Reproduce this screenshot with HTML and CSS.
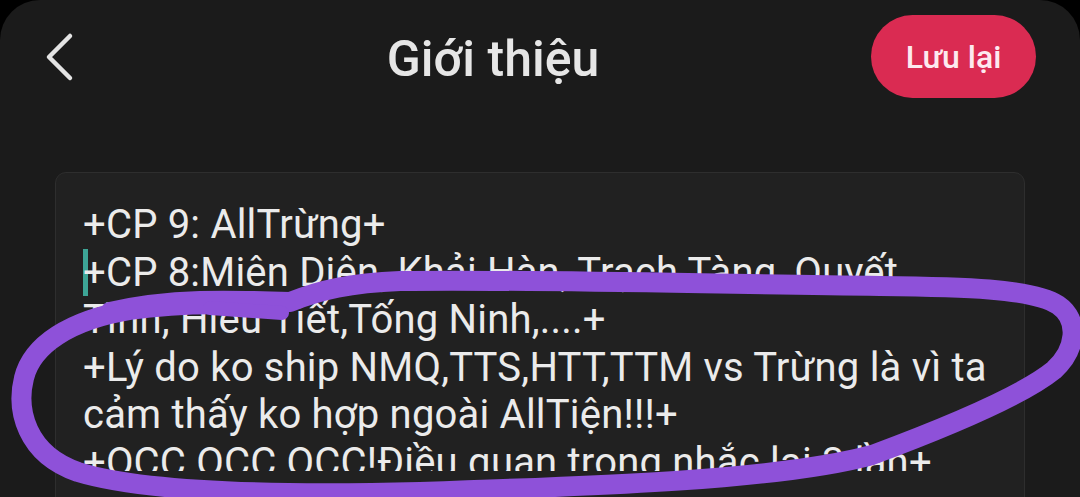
FILE: index.html
```html
<!DOCTYPE html>
<html lang="vi">
<head>
    <meta charset="UTF-8">
    <meta name="viewport" content="width=device-width, initial-scale=1.0">
    <title>Giới thiệu</title>
    <link rel="stylesheet" href="styles.css">
</head>
<body>
    <div class="sheet">
        <header class="topbar">
            <button class="back" aria-label="Quay lại">
                <svg width="30" height="50" viewBox="0 0 30 50">
                    <polyline points="25,4 4,25 25,46" fill="none" stroke="#e4e4e4" stroke-width="4.5" stroke-linecap="round" stroke-linejoin="round"/>
                </svg>
            </button>
            <h1 class="title">Giới thiệu</h1>
            <button class="save">Lưu lại</button>
        </header>

        <div class="field">
            <div class="field-text">
                <div class="line">+CP 9: AllTrừng+</div>
                <div class="line"><span class="caret"></span>+CP 8:Miên Diện, Khải Hàn, Trạch Tàng, Quyết</div>
                <div class="line">Tình, Hiếu Tiết,Tống Ninh,....+</div>
                <div class="line">+Lý do ko ship NMQ,TTS,HTT,TTM vs Trừng là vì ta</div>
                <div class="line">cảm thấy ko hợp ngoài AllTiện!!!+</div>
                <div class="line">+OCC OCC OCC!Điều quan trong nhắc lại 3 lần+</div>
            </div>
        </div>

        <!-- hand drawn circle on top of the screenshot -->
        <svg class="scribble" width="1080" height="497" viewBox="0 0 1080 497">
            <path d="M 110 312 C 170 298, 230 300, 290 302 C 320 290, 350 283, 400 281 C 520 279, 700 284, 880 286 C 960 287, 1032 288, 1058 305 C 1080 320, 1076 350, 1054 370 C 1022 396, 950 426, 872 455 C 780 480, 600 486, 420 492 C 300 495, 150 494, 78 472 C 26 454, 16 410, 24 378 C 32 345, 70 320, 130 310 C 170 304, 220 303, 270 306" fill="none" stroke="#8e51d9" stroke-width="20" stroke-linecap="round" stroke-linejoin="round"/>
            <path d="M 210 308 L 282 313" fill="none" stroke="#8e51d9" stroke-width="14" stroke-linecap="round"/>
        </svg>
    </div>
</body>
</html>
```

FILE: styles.css
```css
body {
    margin: 0;
    padding: 0;
    background: #000;
    font-family: Roboto, "Noto Sans", sans-serif;
    height: 100vh;
    overflow: hidden;
}
.sheet {
    position: relative;
    height: 100vh;
    background: #1b1b1b;
    border-radius: 40px 40px 0 0;
    overflow: hidden;
}
.topbar {
    display: flex;
    align-items: center;
    padding: 15px 44px 0 30px;
    height: 83px;
}
.back {
    width: 85px;
    height: 83px;
    padding: 0 0 0 15px;
    border: none;
    background: none;
    display: flex;
    align-items: center;
    cursor: pointer;
}
.title {
    flex: 1;
    margin: 0;
    padding-top: 5px;
    text-align: center;
    font-size: 50px;
    font-weight: 500;
    color: #e6e6e6;
}
.save {
    width: 165px;
    height: 83px;
    border: none;
    border-radius: 42px;
    background: #da2b52;
    color: #fde9ef;
    font-family: Roboto, sans-serif;
    font-size: 32px;
    font-weight: 500;
    cursor: pointer;
}
.field {
    margin: 74px 55px 0 55px;
    height: 400px;
    background: #212121;
    border: 1px solid #2e2e2e;
    border-radius: 11px;
    padding: 28px 28px 0 27px;
}
.field-text {
    height: 270px;
    overflow: hidden;
    color: #ebebeb;
    font-size: 40px;
    letter-spacing: 0.2px;
    line-height: 47.5px;
}
.line {
    white-space: nowrap;
}
.caret {
    display: inline-block;
    width: 5px;
    height: 47px;
    margin-right: -5px;
    vertical-align: top;
    background: #3da596;
}
.scribble {
    position: absolute;
    left: 0;
    top: 0;
    pointer-events: none;
}
```
